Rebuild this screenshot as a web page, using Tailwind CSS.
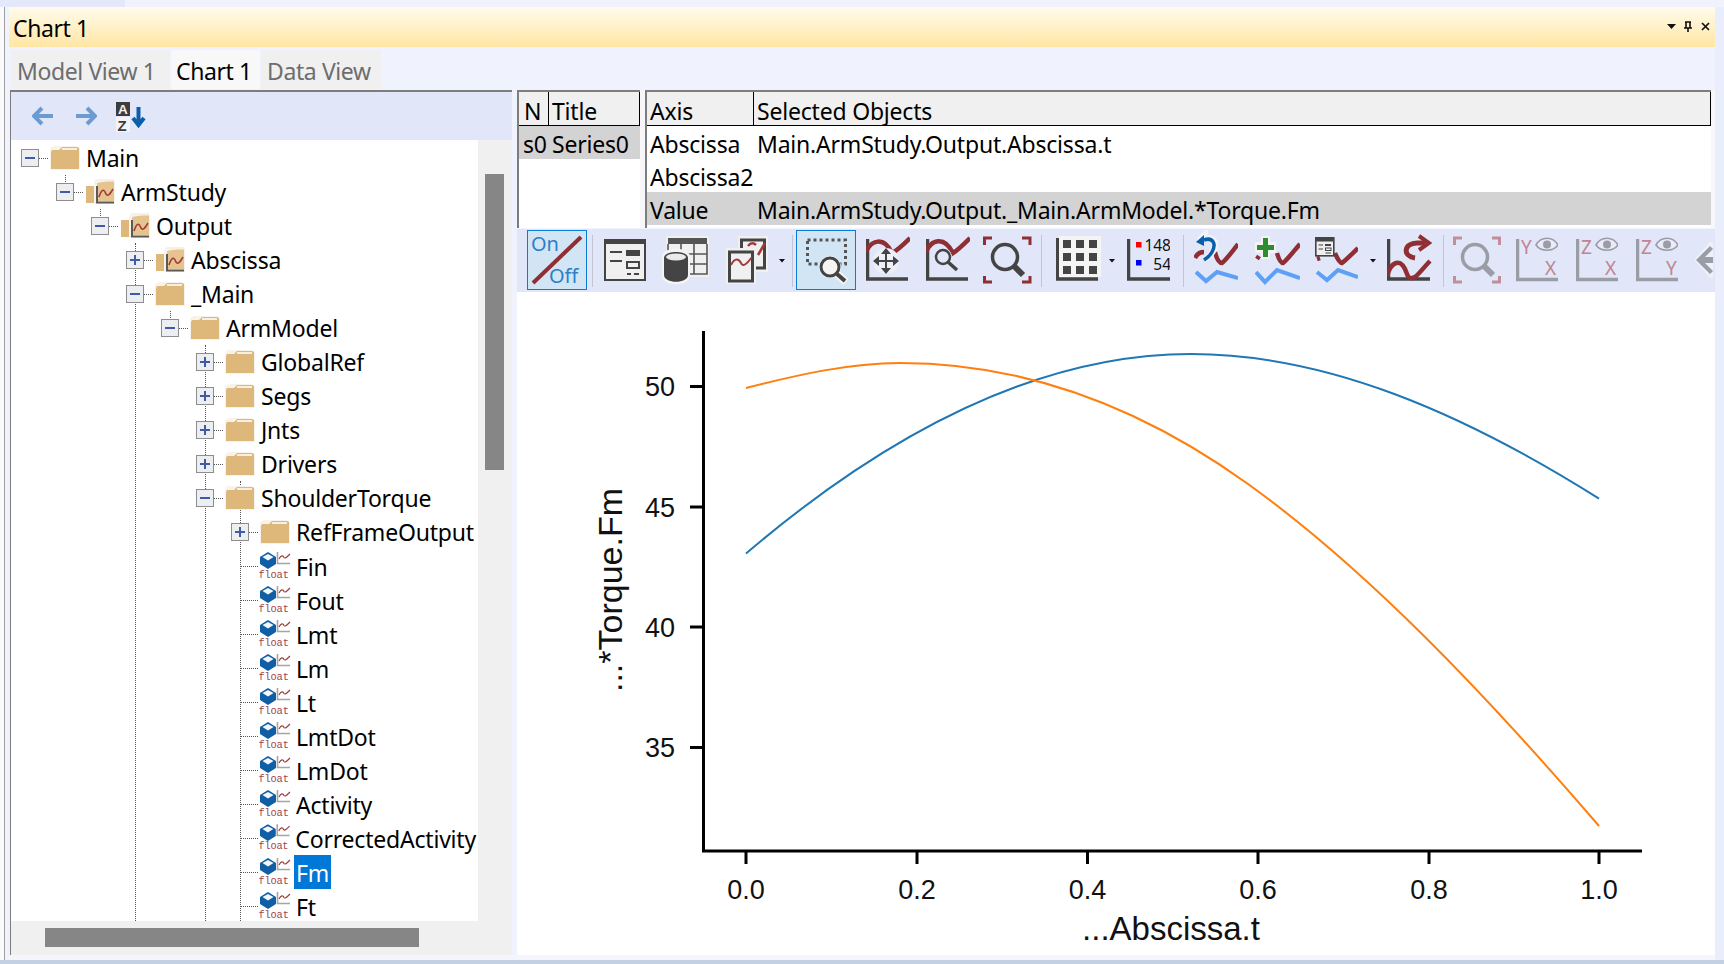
<!DOCTYPE html>
<html>
<head>
<meta charset="utf-8">
<script src="https://cdn.jsdelivr.net/npm/@tailwindcss/browser@4"></script>
</head>
<body class="m-0">
<svg width="0" height="0" class="absolute">
  <defs>
    <symbol id="folder" viewBox="0 0 30 30">
      <path d="M0 5 L4 3 L27 3 L30 5 L30 27 L0 27Z" fill="#f8f3ea"/>
      <path d="M1 9 L1 26 L29 26 L29 5 L27 4 L12 4 L9 7 L2 7Z" fill="#deb77b"/>
      <path d="M12 6 L27 6" stroke="#f6efe2" stroke-width="2"/>
    </symbol>
    <symbol id="cfolder" viewBox="0 0 30 30">
      <path d="M1 9 L1 26 L10 26 L10 9Z" fill="#deb77b"/>
      <path d="M9 5 L11 2 L29 2 L30 5 L30 27 L9 27Z" fill="#f8f3ea"/>
      <path d="M12 6 L29 3 L29 24 L13 24Z" fill="#e6c48f"/>
      <path d="M14 3.5 L29 3.5" stroke="#f6efe2" stroke-width="2"/>
      <path d="M12 9 L12 25.5 L29 25.5" fill="none" stroke="#5a5a5a" stroke-width="2"/>
      <path d="M14 20 C17 11 19 12 21 17 C23 20 25 17 28 12" fill="none" stroke="#a33a3a" stroke-width="1.6"/>
    </symbol>
    <symbol id="leaf" viewBox="0 0 32 30">
      <path d="M1 6 L9 1 L17 6 L17 13 L9 18 L1 13Z" fill="#0f5ea6"/>
      <path d="M3.5 6 L9 3 L14.5 6 L9 9.5Z" fill="#f3f6fa"/>
      <path d="M18.5 1 L18.5 12.5 L31 12.5" fill="none" stroke="#a5a5a5" stroke-width="1.6"/>
      <path d="M20 8 C22 4 24 4 25 6.5 C26 8 28 6 31 3" fill="none" stroke="#a33a3a" stroke-width="1.2"/>
      <text x="-0.5" y="26.5" font-family="Liberation Mono" font-size="10.4" fill="#a0454a">float</text>
    </symbol>
    <symbol id="minus" viewBox="0 0 18 18">
      <rect x="0.5" y="0.5" width="17" height="17" fill="#eceef2" stroke="#8d8d8d"/>
      <path d="M4 9 L14 9" stroke="#3f5aa6" stroke-width="2"/>
    </symbol>
    <symbol id="plus" viewBox="0 0 18 18">
      <rect x="0.5" y="0.5" width="17" height="17" fill="#eceef2" stroke="#8d8d8d"/>
      <path d="M4 9 L14 9 M9 4 L9 14" stroke="#3f5aa6" stroke-width="2"/>
    </symbol>
    <symbol id="drop" viewBox="0 0 8 60">
      <path d="M1 29 L7 29 L4 32.5Z" fill="#111"/>
    </symbol>
  </defs>
</svg>

<div class="relative w-[1724px] h-[964px] overflow-hidden bg-[#f0f2fe] flex flex-col font-['Noto_Sans',sans-serif] text-black">
  <div class="h-[7px] shrink-0"><div class="w-[125px] h-full bg-[#e4e8fb]"></div></div>

  <div class="flex-1 flex min-h-0">
    <div class="w-[5px] shrink-0 bg-[#fbfbfe] border-r border-[#a0a0a0]"></div>
    <div class="w-[4px] shrink-0"></div>

    <div class="w-[1706px] shrink-0 flex flex-col">
      <!-- title bar -->
      <div class="h-[40px] shrink-0 flex items-center justify-between pl-[4px] pr-[1px] bg-gradient-to-b from-[#fffbec] to-[#ffe6a3]">
        <span class="text-[23px] tracking-[-0.4px] leading-none pt-[2px]">Chart 1</span>
        <div class="flex items-center">
          <svg width="50" height="14" viewBox="0 0 50 14">
            <path d="M3 4 L12 4 L7.5 9Z" fill="#111"/>
            <path d="M21 2 L27 2 M22 2 L22 8 M26 2 L26 8 M20 8 L28 8 M24 8 L24 12" stroke="#111" stroke-width="1.6" fill="none"/>
            <path d="M38 3 L45 10 M45 3 L38 10" stroke="#111" stroke-width="1.7"/>
          </svg>
        </div>
      </div>
      <!-- tabs -->
      <div class="h-[39px] mt-[3px] shrink-0 flex gap-[1px] pl-[2px] text-[23px] tracking-[-0.4px] leading-none">
        <div class="w-[159px] flex items-center pl-[6px] pt-[4px] bg-[#f0f0f0] text-[#6d6d6d] whitespace-nowrap">Model View 1</div>
        <div class="w-[89px] flex items-center pl-[5px] pt-[4px] bg-[#f8f8f8] whitespace-nowrap">Chart 1</div>
        <div class="w-[120px] flex items-center pl-[6px] pt-[4px] bg-[#f0f0f0] text-[#6d6d6d] whitespace-nowrap">Data View</div>
      </div>

      <!-- panels -->
      <div class="flex-1 flex min-h-0 mt-[1px]">
        <!-- left panel -->
        <div class="ml-[1px] w-[502px] shrink-0 border-t-2 border-l border-[#7d7d7d] bg-[#f0f0f0] flex flex-col">
          <div class="h-[48px] shrink-0 bg-[#e1e6f8] flex items-center pl-[21px]">
            <svg width="22" height="22" viewBox="0 0 22 22"><path d="M10 3 L2 11 L10 19 M3 11 L21 11" fill="none" stroke="#6c9bd2" stroke-width="4"/></svg>
            <svg class="ml-[21px]" width="22" height="22" viewBox="0 0 22 22"><path d="M12 3 L20 11 L12 19 M1 11 L19 11" fill="none" stroke="#6c9bd2" stroke-width="4"/></svg>
            <svg class="ml-[18px]" width="32" height="34" viewBox="0 0 32 34">
              <rect x="1" y="3" width="14" height="14" fill="#3d3d3d"/>
              <text x="3" y="15" font-family="Liberation Sans" font-weight="700" font-size="13.5" fill="#f2f2f2">A</text>
              <rect x="1" y="18" width="14" height="15" fill="#f4f4f4"/>
              <text x="2.5" y="31.5" font-family="Liberation Sans" font-weight="700" font-size="15" fill="#3d3d3d">Z</text>
              <path d="M23.5 8 L23.5 26 M18 19 L23.5 26 L29 19" fill="none" stroke="#0b5ea8" stroke-width="4"/>
            </svg>
          </div>
          <div class="flex-1 flex min-h-0">
            <!-- tree -->
            <div class="relative w-[467px] shrink-0 bg-white overflow-hidden text-[23px] tracking-[-0.2px] leading-none">
              <div class="absolute left-[54px] top-[35px] h-[9px] border-l border-dotted border-[#555]"></div>
              <div class="absolute left-[89px] top-[69px] h-[9px] border-l border-dotted border-[#555]"></div>
              <div class="absolute left-[124px] top-[103px] bottom-0 border-l border-dotted border-[#555]"></div>
              <div class="absolute left-[159px] top-[171px] h-[9px] border-l border-dotted border-[#555]"></div>
              <div class="absolute left-[194px] top-[205px] bottom-0 border-l border-dotted border-[#555]"></div>
              <div class="absolute left-[229px] top-[341px] bottom-0 border-l border-dotted border-[#555]"></div>

              <div class="relative flex flex-col whitespace-nowrap pt-[1px]">
                <div class="h-[34px] flex items-center pl-[10px]"><svg width="18" height="18"><use href="#minus"/></svg><div class="w-[9px] mr-[2px] border-t border-dotted border-[#555]"></div><svg width="30" height="30"><use href="#folder"/></svg><span class="ml-[4px] px-[2px] pt-[1px] leading-[33px]">Main</span></div>
                <div class="h-[34px] flex items-center pl-[45px]"><svg width="18" height="18"><use href="#minus"/></svg><div class="w-[9px] mr-[2px] border-t border-dotted border-[#555]"></div><svg width="30" height="30"><use href="#cfolder"/></svg><span class="ml-[4px] px-[2px] pt-[1px] leading-[33px]">ArmStudy</span></div>
                <div class="h-[34px] flex items-center pl-[80px]"><svg width="18" height="18"><use href="#minus"/></svg><div class="w-[9px] mr-[2px] border-t border-dotted border-[#555]"></div><svg width="30" height="30"><use href="#cfolder"/></svg><span class="ml-[4px] px-[2px] pt-[1px] leading-[33px]">Output</span></div>
                <div class="h-[34px] flex items-center pl-[115px]"><svg width="18" height="18"><use href="#plus"/></svg><div class="w-[9px] mr-[2px] border-t border-dotted border-[#555]"></div><svg width="30" height="30"><use href="#cfolder"/></svg><span class="ml-[4px] px-[2px] pt-[1px] leading-[33px]">Abscissa</span></div>
                <div class="h-[34px] flex items-center pl-[115px]"><svg width="18" height="18"><use href="#minus"/></svg><div class="w-[9px] mr-[2px] border-t border-dotted border-[#555]"></div><svg width="30" height="30"><use href="#folder"/></svg><span class="ml-[4px] px-[2px] pt-[1px] leading-[33px]">_Main</span></div>
                <div class="h-[34px] flex items-center pl-[150px]"><svg width="18" height="18"><use href="#minus"/></svg><div class="w-[9px] mr-[2px] border-t border-dotted border-[#555]"></div><svg width="30" height="30"><use href="#folder"/></svg><span class="ml-[4px] px-[2px] pt-[1px] leading-[33px]">ArmModel</span></div>
                <div class="h-[34px] flex items-center pl-[185px]"><svg width="18" height="18"><use href="#plus"/></svg><div class="w-[9px] mr-[2px] border-t border-dotted border-[#555]"></div><svg width="30" height="30"><use href="#folder"/></svg><span class="ml-[4px] px-[2px] pt-[1px] leading-[33px]">GlobalRef</span></div>
                <div class="h-[34px] flex items-center pl-[185px]"><svg width="18" height="18"><use href="#plus"/></svg><div class="w-[9px] mr-[2px] border-t border-dotted border-[#555]"></div><svg width="30" height="30"><use href="#folder"/></svg><span class="ml-[4px] px-[2px] pt-[1px] leading-[33px]">Segs</span></div>
                <div class="h-[34px] flex items-center pl-[185px]"><svg width="18" height="18"><use href="#plus"/></svg><div class="w-[9px] mr-[2px] border-t border-dotted border-[#555]"></div><svg width="30" height="30"><use href="#folder"/></svg><span class="ml-[4px] px-[2px] pt-[1px] leading-[33px]">Jnts</span></div>
                <div class="h-[34px] flex items-center pl-[185px]"><svg width="18" height="18"><use href="#plus"/></svg><div class="w-[9px] mr-[2px] border-t border-dotted border-[#555]"></div><svg width="30" height="30"><use href="#folder"/></svg><span class="ml-[4px] px-[2px] pt-[1px] leading-[33px]">Drivers</span></div>
                <div class="h-[34px] flex items-center pl-[185px]"><svg width="18" height="18"><use href="#minus"/></svg><div class="w-[9px] mr-[2px] border-t border-dotted border-[#555]"></div><svg width="30" height="30"><use href="#folder"/></svg><span class="ml-[4px] px-[2px] pt-[1px] leading-[33px]">ShoulderTorque</span></div>
                <div class="h-[34px] flex items-center pl-[220px]"><svg width="18" height="18"><use href="#plus"/></svg><div class="w-[9px] mr-[2px] border-t border-dotted border-[#555]"></div><svg width="30" height="30"><use href="#folder"/></svg><span class="ml-[4px] px-[2px] pt-[1px] leading-[33px]">RefFrameOutput</span></div>
                <div class="h-[34px] flex items-center pl-[229px]"><div class="w-[18px] mr-[1px] border-t border-dotted border-[#555]"></div><svg width="32" height="30"><use href="#leaf"/></svg><span class="ml-[3px] px-[2px] pt-[2px] leading-[32px]">Fin</span></div>
                <div class="h-[34px] flex items-center pl-[229px]"><div class="w-[18px] mr-[1px] border-t border-dotted border-[#555]"></div><svg width="32" height="30"><use href="#leaf"/></svg><span class="ml-[3px] px-[2px] pt-[2px] leading-[32px]">Fout</span></div>
                <div class="h-[34px] flex items-center pl-[229px]"><div class="w-[18px] mr-[1px] border-t border-dotted border-[#555]"></div><svg width="32" height="30"><use href="#leaf"/></svg><span class="ml-[3px] px-[2px] pt-[2px] leading-[32px]">Lmt</span></div>
                <div class="h-[34px] flex items-center pl-[229px]"><div class="w-[18px] mr-[1px] border-t border-dotted border-[#555]"></div><svg width="32" height="30"><use href="#leaf"/></svg><span class="ml-[3px] px-[2px] pt-[2px] leading-[32px]">Lm</span></div>
                <div class="h-[34px] flex items-center pl-[229px]"><div class="w-[18px] mr-[1px] border-t border-dotted border-[#555]"></div><svg width="32" height="30"><use href="#leaf"/></svg><span class="ml-[3px] px-[2px] pt-[2px] leading-[32px]">Lt</span></div>
                <div class="h-[34px] flex items-center pl-[229px]"><div class="w-[18px] mr-[1px] border-t border-dotted border-[#555]"></div><svg width="32" height="30"><use href="#leaf"/></svg><span class="ml-[3px] px-[2px] pt-[2px] leading-[32px]">LmtDot</span></div>
                <div class="h-[34px] flex items-center pl-[229px]"><div class="w-[18px] mr-[1px] border-t border-dotted border-[#555]"></div><svg width="32" height="30"><use href="#leaf"/></svg><span class="ml-[3px] px-[2px] pt-[2px] leading-[32px]">LmDot</span></div>
                <div class="h-[34px] flex items-center pl-[229px]"><div class="w-[18px] mr-[1px] border-t border-dotted border-[#555]"></div><svg width="32" height="30"><use href="#leaf"/></svg><span class="ml-[3px] px-[2px] pt-[2px] leading-[32px]">Activity</span></div>
                <div class="h-[34px] flex items-center pl-[229px]"><div class="w-[18px] mr-[1px] border-t border-dotted border-[#555]"></div><svg width="32" height="30"><use href="#leaf"/></svg><span class="ml-[3px] px-[2px] pt-[2px] leading-[32px]">CorrectedActivity</span></div>
                <div class="h-[34px] flex items-center pl-[229px]"><div class="w-[18px] mr-[1px] border-t border-dotted border-[#555]"></div><svg width="32" height="30"><use href="#leaf"/></svg><span class="ml-[3px] px-[2px] pt-[2px] leading-[32px] bg-[#0078d7] text-white">Fm</span></div>
                <div class="h-[34px] flex items-center pl-[229px]"><div class="w-[18px] mr-[1px] border-t border-dotted border-[#555]"></div><svg width="32" height="30"><use href="#leaf"/></svg><span class="ml-[3px] px-[2px] pt-[2px] leading-[32px]">Ft</span></div>
              </div>
            </div>
            <!-- vertical scrollbar -->
            <div class="flex-1 pt-[34px] pl-[7px]"><div class="w-[19px] h-[296px] bg-[#868686]"></div></div>
          </div>
          <!-- horizontal scrollbar -->
          <div class="h-[34px] shrink-0 pt-[7px] pl-[34px]"><div class="w-[374px] h-[19px] bg-[#868686]"></div></div>
        </div>

        <!-- right panel -->
        <div class="ml-[5px] w-[1198px] shrink-0 flex flex-col">
          <div class="h-[138px] shrink-0 flex text-[23px] tracking-[-0.2px] leading-none whitespace-nowrap overflow-hidden bg-[#f7f7fa]">
            <div class="w-[123px] shrink-0 border-l-2 border-t-2 border-[#7d7d7d] bg-white flex flex-col">
              <div class="h-[34px] flex border-b border-black bg-[#f0f0f0]">
                <div class="w-[30px] pl-[5px] pt-[6px] flex items-center border-r border-black">N</div>
                <div class="w-[91px] pl-[3px] pt-[6px] flex items-center border-r border-black">Title</div>
              </div>
              <div class="h-[33px] w-[121px] flex items-center bg-[#d3d3d3] pt-[4px]"><span class="w-[33px] pl-[4px]">s0</span><span>Series0</span></div>
            </div>
            <div class="w-[5px] shrink-0"></div>
            <div class="w-[1066px] shrink-0 border-l-2 border-t-2 border-[#7d7d7d] bg-white flex flex-col">
              <div class="h-[34px] flex border-b border-r border-black bg-[#f0f0f0]">
                <div class="w-[107px] pl-[3px] pt-[6px] flex items-center border-r border-black">Axis</div>
                <div class="pl-[3px] pt-[6px] flex items-center">Selected Objects</div>
              </div>
              <div class="h-[33px] flex items-center pt-[4px]"><span class="w-[106px] pl-[3px]">Abscissa</span><span class="pl-[4px]">Main.ArmStudy.Output.Abscissa.t</span></div>
              <div class="h-[33px] flex items-center pt-[4px]"><span class="w-[106px] pl-[3px]">Abscissa2</span></div>
              <div class="h-[33px] flex items-center pt-[4px] bg-[#d3d3d3] w-[1064px]"><span class="w-[106px] pl-[3px]">Value</span><span class="pl-[4px]">Main.ArmStudy.Output._Main.ArmModel.*Torque.Fm</span></div>
            </div>
          </div>

          <!-- chart toolbar -->
          <div class="h-[63px] shrink-0 bg-[#e1e6f8] flex items-start pt-[1px] pl-[10px] overflow-hidden mt-[1px]">
            <!-- On/Off -->
            <svg class="shrink-0" width="60" height="60" viewBox="0 0 60 60">
              <rect x="0.5" y="0.5" width="59" height="59" fill="#d1e5f5" stroke="#0a7bd6"/>
              <text x="4" y="21" font-family="Noto Sans" font-size="20" fill="#2b80c8">On</text>
              <text x="22" y="53" font-family="Noto Sans" font-size="20" fill="#2b80c8">Off</text>
              <path d="M6 53 L54 7" stroke="#8f2f33" stroke-width="4"/>
            </svg>
            <div class="shrink-0 w-[1px] h-[52px] mt-[5px] ml-[5px] bg-[#c3c6d2]"></div>
            <!-- form window -->
            <svg class="shrink-0 ml-[11px]" width="42" height="60" viewBox="0 0 42 60">
              <rect x="0" y="9" width="42" height="42" fill="#444"/>
              <rect x="2" y="14" width="38" height="35" fill="#f0f0f0"/>
              <path d="M6 22 L18 22 M6 31 L18 31 M23 44 L27 44 M30 44 L35 44" stroke="#444" stroke-width="2"/>
              <rect x="22" y="20" width="14" height="6" fill="#444"/>
              <rect x="23" y="32" width="12" height="6" fill="#f0f0f0" stroke="#444" stroke-width="2"/>
            </svg>
            <!-- DB grid -->
            <svg class="shrink-0 ml-[16px]" width="47" height="60" viewBox="0 0 47 60">
              <rect x="4" y="6" width="43" height="41" fill="#f0f0f0"/>
              <rect x="6" y="8" width="39" height="6" fill="#555"/>
              <path d="M6 14 L6 44 L45 44 L45 14 M6 24 L45 24 M6 34 L45 34 M19 8 L19 44 M32 8 L32 44" fill="none" stroke="#555" stroke-width="1.6"/>
              <path d="M0 27 C0 16 28 16 28 27 L28 46 C28 57 0 57 0 46Z" fill="#f4f4f4"/>
              <path d="M2 28 C2 20 26 20 26 28 L26 45 C26 54 2 54 2 45Z" fill="#444"/>
              <ellipse cx="14" cy="27" rx="10" ry="3.5" fill="#eaeaea"/>
            </svg>
            <!-- charts -->
            <svg class="shrink-0 ml-[17px]" width="42" height="60" viewBox="0 0 42 60">
              <rect x="12" y="6" width="30" height="36" fill="#f0f0f0"/>
              <rect x="15.5" y="10" width="23" height="28" fill="#f0f0f0" stroke="#444" stroke-width="3"/>
              <path d="M22 16 C25 12 28 13 30 15 M32 25 L39 13" fill="none" stroke="#a33a3a" stroke-width="2.5"/>
              <rect x="0" y="18" width="30" height="36" fill="#f0f0f0"/>
              <rect x="3.5" y="22" width="23" height="29" fill="#f0f0f0" stroke="#444" stroke-width="3"/>
              <path d="M5 35 C9 27 13 29 15 33 C17 37 20 35 26 27" fill="none" stroke="#a33a3a" stroke-width="2"/>
            </svg>
            <svg class="shrink-0 ml-[10px]" width="8" height="60"><use href="#drop"/></svg>
            <div class="shrink-0 w-[1px] h-[52px] mt-[5px] ml-[6px] bg-[#c3c6d2]"></div>
            <!-- rubber band zoom -->
            <svg class="shrink-0 ml-[3px]" width="60" height="60" viewBox="0 0 60 60">
              <rect x="0.5" y="0.5" width="59" height="59" fill="#d1e5f5" stroke="#0a7bd6"/>
              <rect x="11.5" y="10" width="38" height="24" fill="none" stroke="#555" stroke-width="3" stroke-dasharray="3 3"/>
              <path d="M40 43 L50 52" stroke="#f4f4f4" stroke-width="8"/>
              <circle cx="34" cy="37" r="11" fill="#f4f4f4"/>
              <circle cx="34" cy="37" r="9" fill="#f4f4f4" stroke="#444" stroke-width="3"/>
              <path d="M41 44 L49 51" stroke="#444" stroke-width="4"/>
            </svg>
            <!-- pan -->
            <svg class="shrink-0 ml-[10px]" width="44" height="60" viewBox="0 0 44 60">
              <path d="M1.5 9 L1.5 49 L42 49" fill="none" stroke="#444" stroke-width="3.5"/>
              <path d="M0 22 C5 10 18 6 26 23 C32 20 38 14 44 8" fill="none" stroke="#8f2f33" stroke-width="4.5"/>
              <circle cx="20" cy="31" r="13" fill="#eceff8"/>
              <path d="M20 18 L25 24 L15 24Z M20 44 L25 38 L15 38Z M7 31 L13 26 L13 36Z M33 31 L27 26 L27 36Z" fill="#444"/>
              <path d="M20 22 L20 40 M11 31 L29 31" stroke="#444" stroke-width="2"/>
            </svg>
            <!-- zoom curve -->
            <svg class="shrink-0 ml-[16px]" width="44" height="60" viewBox="0 0 44 60">
              <path d="M1.5 9 L1.5 49 L42 49" fill="none" stroke="#444" stroke-width="3.5"/>
              <path d="M0 22 C5 10 18 5 27 23 C32 20 38 14 44 8" fill="none" stroke="#8f2f33" stroke-width="4.5"/>
              <circle cx="17" cy="27" r="9" fill="#e1e6f8"/>
              <circle cx="17" cy="27" r="7" fill="none" stroke="#444" stroke-width="2.5"/>
              <path d="M22 32 L31 40" stroke="#444" stroke-width="3.5"/>
            </svg>
            <!-- zoom fit -->
            <svg class="shrink-0 ml-[13px]" width="49" height="60" viewBox="0 0 49 60">
              <path d="M9 8 L1.5 8 L1.5 15 M39 8 L47 8 L47 15 M1.5 46 L1.5 52 L9 52 M47 46 L47 52 L39 52" fill="none" stroke="#8f2f33" stroke-width="3"/>
              <circle cx="22" cy="27" r="12.5" fill="none" stroke="#444" stroke-width="3.5"/>
              <path d="M31 36 L40 45" stroke="#444" stroke-width="6"/>
            </svg>
            <div class="shrink-0 w-[1px] h-[52px] mt-[5px] ml-[9px] bg-[#c3c6d2]"></div>
            <!-- grid -->
            <svg class="shrink-0 ml-[14px]" width="45" height="60" viewBox="0 0 45 60">
              <path d="M1.5 8 L1.5 49 L42 49" fill="none" stroke="#444" stroke-width="3.5"/>
              <rect x="3" y="6" width="42" height="41" fill="#f4f4f4"/>
              <path fill="#444" d="M7 10h8v8h-8z M20 10h8v8h-8z M33 10h8v8h-8z M7 23h8v8h-8z M20 23h8v8h-8z M33 23h8v8h-8z M7 36h8v8h-8z M20 36h8v8h-8z M33 36h8v8h-8z"/>
            </svg>
            <svg class="shrink-0 ml-[7px]" width="8" height="60"><use href="#drop"/></svg>
            <!-- values -->
            <svg class="shrink-0 ml-[11px]" width="43" height="60" viewBox="0 0 43 60">
              <path d="M1.5 9 L1.5 49 L43 49" fill="none" stroke="#444" stroke-width="3.5"/>
              <rect x="9" y="12" width="5.5" height="5.5" fill="#ff0000"/>
              <rect x="9" y="30" width="5.5" height="5.5" fill="#0000ff"/>
              <text x="44" y="21" text-anchor="end" font-family="Noto Sans" font-size="15.5" fill="#111">148</text>
              <text x="44" y="39.5" text-anchor="end" font-family="Noto Sans" font-size="15.5" fill="#111">54</text>
            </svg>
            <div class="shrink-0 w-[1px] h-[52px] mt-[5px] ml-[13px] bg-[#c3c6d2]"></div>
            <!-- undo -->
            <svg class="shrink-0 ml-[10px]" width="44" height="60" viewBox="0 0 44 60">
              <path d="M2 42 L12 51 L23 42 L44 48" fill="none" stroke="#5ea0f5" stroke-width="4"/>
              <path d="M1 28 C3 24 6 22 10 22 M21 22 C23 30 25 33 28 33 C32 30 38 22 44 14" fill="none" stroke="#8f2f33" stroke-width="4.5"/>
              <path d="M5 10 L11 4 L11 8 C22 6 24 16 17 24 C15 26 13 28 10 30" fill="none" stroke="#f0f2fb" stroke-width="6"/>
              <path d="M10 10 C18 7 23 13 18 22 C16 26 13 28 10 30" fill="none" stroke="#0b5ea8" stroke-width="3.5"/>
              <path d="M2 12 L10 5 L10 16Z" fill="#0b5ea8"/>
            </svg>
            <!-- add -->
            <svg class="shrink-0 ml-[17px]" width="45" height="60" viewBox="0 0 45 60">
              <path d="M1 42 L10 52 L22 40 L45 48" fill="none" stroke="#5ea0f5" stroke-width="4"/>
              <path d="M2 29 L4 26 M22 23 C24 30 26 33 28 33 C32 30 38 22 45 14" fill="none" stroke="#8f2f33" stroke-width="4.5"/>
              <path d="M6 6 L15 6 L15 12 L21 12 L21 23 L15 23 L15 29 L6 29 L6 23 L0 23 L0 12 L6 12Z" fill="#f2f4f4"/>
              <path d="M8 8 L13 8 L13 15 L19 15 L19 20 L13 20 L13 27 L8 27 L8 20 L2 20 L2 15 L8 15Z" fill="#2e8b2e"/>
            </svg>
            <!-- form curve -->
            <svg class="shrink-0 ml-[15px]" width="43" height="60" viewBox="0 0 43 60">
              <path d="M2 42 L12 50 L23 40 L43 47" fill="none" stroke="#5ea0f5" stroke-width="4"/>
              <path d="M2 29 L5 28 M20 23 C22 28 25 33 27 33 C31 30 37 24 43 18" fill="none" stroke="#8f2f33" stroke-width="4.5"/>
              <rect x="0.8" y="7.8" width="18" height="18" fill="#efefef" stroke="#444" stroke-width="1.6"/>
              <rect x="1" y="8" width="17.6" height="3.5" fill="#444"/>
              <path d="M3.5 15 L8 15 M3.5 19 L8 19 M10.5 23 L16 23" stroke="#444" stroke-width="1.2"/>
              <rect x="10" y="14" width="6" height="2" fill="#444"/>
              <rect x="10.5" y="18" width="5.5" height="2.5" fill="none" stroke="#444"/>
            </svg>
            <svg class="shrink-0 ml-[11px]" width="8" height="60"><use href="#drop"/></svg>
            <!-- curve redo -->
            <svg class="shrink-0 ml-[10px]" width="45" height="60" viewBox="0 0 45 60">
              <path d="M1.5 9 L1.5 49 L43 49" fill="none" stroke="#444" stroke-width="3.5"/>
              <path d="M0 46 C4 32 14 26 20 44 C22 50 25 48 28 47 C33 43 38 36 43 31" fill="none" stroke="#8f2f33" stroke-width="4.5"/>
              <path d="M28 28 C15 26 17 13 30 13 L38 13" fill="none" stroke="#8f2f33" stroke-width="5"/>
              <path d="M32 6 L42 13 L32 20" fill="none" stroke="#8f2f33" stroke-width="4"/>
            </svg>
            <div class="shrink-0 w-[1px] h-[52px] mt-[5px] ml-[11px] bg-[#c3c6d2]"></div>
            <!-- faded zoom -->
            <svg class="shrink-0 ml-[9px]" width="48" height="60" viewBox="0 0 48 60">
              <path d="M9 8 L1.5 8 L1.5 15 M39 8 L46.5 8 L46.5 15 M1.5 46 L1.5 52 L9 52 M46.5 46 L46.5 52 L39 52" fill="none" stroke="#c08f99" stroke-width="3"/>
              <circle cx="22" cy="27" r="12.5" fill="none" stroke="#9a9ca6" stroke-width="3.5"/>
              <path d="M31 36 L40 45" stroke="#9a9ca6" stroke-width="6"/>
            </svg>
            <!-- YX -->
            <svg class="shrink-0 ml-[15px]" width="42" height="60" viewBox="0 0 42 60">
              <path d="M1.5 9 L1.5 49.5 L42 49.5" fill="none" stroke="#9a9ca6" stroke-width="3.5"/>
              <path d="M20 15 C25 6 37 6 42 15 C37 22 25 22 20 15Z" fill="#e8ebf8" stroke="#9a9ca6" stroke-width="1.6"/>
              <circle cx="31" cy="14.5" r="4" fill="#9a9ca6"/>
              <text x="5" y="24" font-family="Noto Sans" font-size="19" fill="#c08590">Y</text>
              <text x="29" y="45" font-family="Noto Sans" font-size="19" fill="#c08590">X</text>
            </svg>
            <!-- ZX -->
            <svg class="shrink-0 ml-[18px]" width="42" height="60" viewBox="0 0 42 60">
              <path d="M1.5 9 L1.5 49.5 L42 49.5" fill="none" stroke="#9a9ca6" stroke-width="3.5"/>
              <path d="M20 15 C25 6 37 6 42 15 C37 22 25 22 20 15Z" fill="#e8ebf8" stroke="#9a9ca6" stroke-width="1.6"/>
              <circle cx="31" cy="14.5" r="4" fill="#9a9ca6"/>
              <text x="5" y="24" font-family="Noto Sans" font-size="19" fill="#c08590">Z</text>
              <text x="29" y="45" font-family="Noto Sans" font-size="19" fill="#c08590">X</text>
            </svg>
            <!-- ZY -->
            <svg class="shrink-0 ml-[18px]" width="42" height="60" viewBox="0 0 42 60">
              <path d="M1.5 9 L1.5 49.5 L42 49.5" fill="none" stroke="#9a9ca6" stroke-width="3.5"/>
              <path d="M20 15 C25 6 37 6 42 15 C37 22 25 22 20 15Z" fill="#e8ebf8" stroke="#9a9ca6" stroke-width="1.6"/>
              <circle cx="31" cy="14.5" r="4" fill="#9a9ca6"/>
              <text x="5" y="24" font-family="Noto Sans" font-size="19" fill="#c08590">Z</text>
              <text x="30" y="45" font-family="Noto Sans" font-size="19" fill="#c08590">Y</text>
            </svg>
            <!-- left arrow -->
            <svg class="shrink-0 ml-[16px]" width="19" height="60" viewBox="0 0 19 60">
              <path d="M0 30 L16 12 L19 12 L19 24 L19 36 L19 48 L16 48Z" fill="#eef0fa"/>
              <path d="M2 30 L16 16 L19 19 L11 27 L19 27 L19 33 L11 33 L19 41 L16 44Z" fill="#9a9ca6"/>
            </svg>
          </div>

          <!-- chart -->
          <div class="flex-1 bg-white min-h-0">
            <svg width="1198" height="663" viewBox="517 292 1198 663" class="block">
              <g fill="none" stroke="#000" stroke-width="3">
                <path d="M703.5 331 L703.5 851 L1642 851"/>
                <path d="M690 386.5 L703 386.5 M690 507 L703 507 M690 627 L703 627 M690 747.5 L703 747.5"/>
                <path d="M746 851 L746 864 M917 851 L917 864 M1087.5 851 L1087.5 864 M1258 851 L1258 864 M1429 851 L1429 864 M1599 851 L1599 864"/>
              </g>
              <path d="M746 553.5 C894 427.5 1043 354 1191 354 C1327 354 1463 413 1599 498.6" fill="none" stroke="#1f77b4" stroke-width="2"/>
              <path d="M746 388 C797 375 849 363 900 363 C1016 363 1132 400.5 1248 484 C1365 568 1482 690 1599 826" fill="none" stroke="#ff7f0e" stroke-width="2"/>
              <g font-family="Liberation Sans" font-size="27" fill="#111">
                <text x="675" y="396" text-anchor="end">50</text>
                <text x="675" y="517" text-anchor="end">45</text>
                <text x="675" y="637" text-anchor="end">40</text>
                <text x="675" y="757" text-anchor="end">35</text>
                <text x="746" y="899" text-anchor="middle">0.0</text>
                <text x="917" y="899" text-anchor="middle">0.2</text>
                <text x="1087.5" y="899" text-anchor="middle">0.4</text>
                <text x="1258" y="899" text-anchor="middle">0.6</text>
                <text x="1429" y="899" text-anchor="middle">0.8</text>
                <text x="1599" y="899" text-anchor="middle">1.0</text>
              </g>
              <text x="1171" y="940" text-anchor="middle" font-family="Liberation Sans" font-size="33" fill="#111">...Abscissa.t</text>
              <text transform="translate(622 590) rotate(-90)" text-anchor="middle" font-family="Liberation Sans" font-size="34" fill="#111">...*Torque.Fm</text>
            </svg>
          </div>
        </div>
      </div>
      <div class="h-[5px] shrink-0 bg-[#f5f6fd]"></div>
    </div>
    <div class="flex-1 bg-[#eaedfb]"></div>
  </div>
  <div class="h-[4px] shrink-0 bg-[#c3d0e3]"></div>
</div>
</body>
</html>
